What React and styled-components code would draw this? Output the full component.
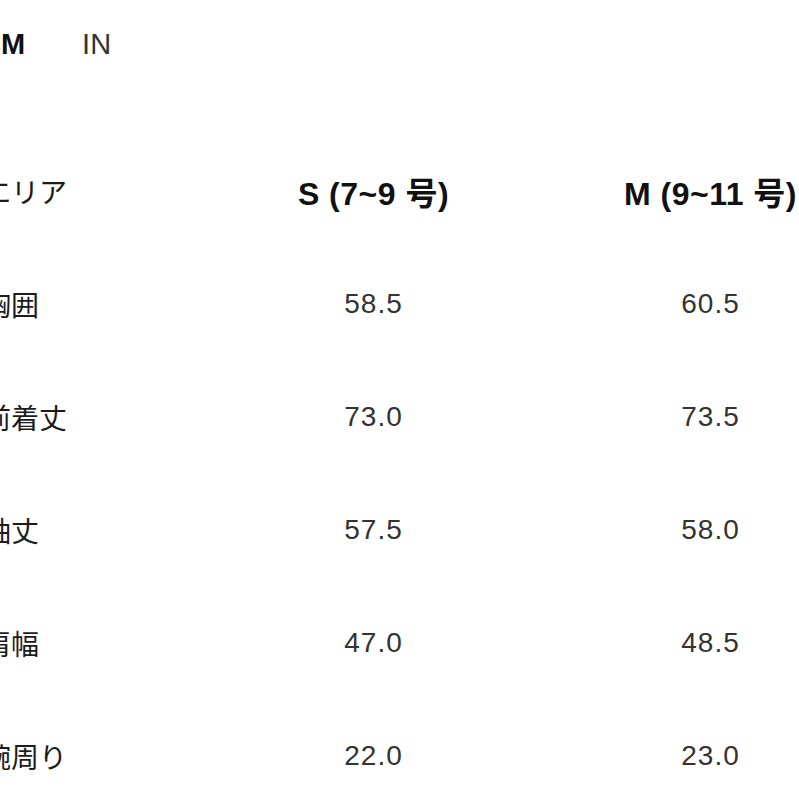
import React from 'react';
import styled, { createGlobalStyle } from 'styled-components';

const rows = [
    { label: '胸囲', s: '58.5', m: '60.5' },
    { label: '前着丈', s: '73.0', m: '73.5' },
    { label: '袖丈', s: '57.5', m: '58.0' },
    { label: '肩幅', s: '47.0', m: '48.5' },
    { label: '腕周り', s: '22.0', m: '23.0' },
];

const App = () => {
    return (
        <Pagina>
            <Global />
            <Unidades>
                <Unidad activo>CM</Unidad>
                <Unidad>IN</Unidad>
            </Unidades>
            <Tabla>
                <Etiqueta>エリア</Etiqueta>
                <Cabecera>S (7~9 号)</Cabecera>
                <Cabecera>M (9~11 号)</Cabecera>
                {rows.map((r) => (
                    <React.Fragment key={r.label}>
                        <Etiqueta>{r.label}</Etiqueta>
                        <Valor>{r.s}</Valor>
                        <Valor>{r.m}</Valor>
                    </React.Fragment>
                ))}
            </Tabla>
        </Pagina>
    );
}

const Global = createGlobalStyle`
    html, body {
        margin: 0;
        background: #fff;
        overflow: hidden;
    }
    body {
        font-family: "Liberation Sans", "Noto Sans CJK JP", sans-serif;
        color: #1c1c1c;
    }
`;

const Pagina = styled.div`
    width: 799px;
    height: 799px;
    overflow: hidden;
    padding-top: 26px;
    box-sizing: border-box;
`;

const Unidades = styled.div`
    display: flex;
    align-items: center;
    gap: 57px;
    margin-left: -20px;
`;

const Unidad = styled.span`
    font-size: 29px;
    line-height: 36px;
    font-weight: ${p => p.activo ? 700 : 300};
    color: ${p => p.activo ? '#111' : '#333'};
`;

const Tabla = styled.div`
    display: grid;
    grid-template-columns: 222px 337px 337px;
    grid-auto-rows: 113px;
    align-items: center;
    margin-left: -17px;
    margin-top: 72px;
`;

const Etiqueta = styled.div`
    font-family: "Noto Sans CJK JP", sans-serif;
    font-size: 28px;
    font-weight: 400;
    color: #1c1c1c;
`;

const Cabecera = styled.div`
    text-align: center;
    font-size: 32px;
    font-weight: 700;
    letter-spacing: 0.5px;
    color: #111;
`;

const Valor = styled.div`
    text-align: center;
    font-size: 28px;
    font-weight: 400;
    letter-spacing: 1px;
    color: #333;
`;

export default App;
